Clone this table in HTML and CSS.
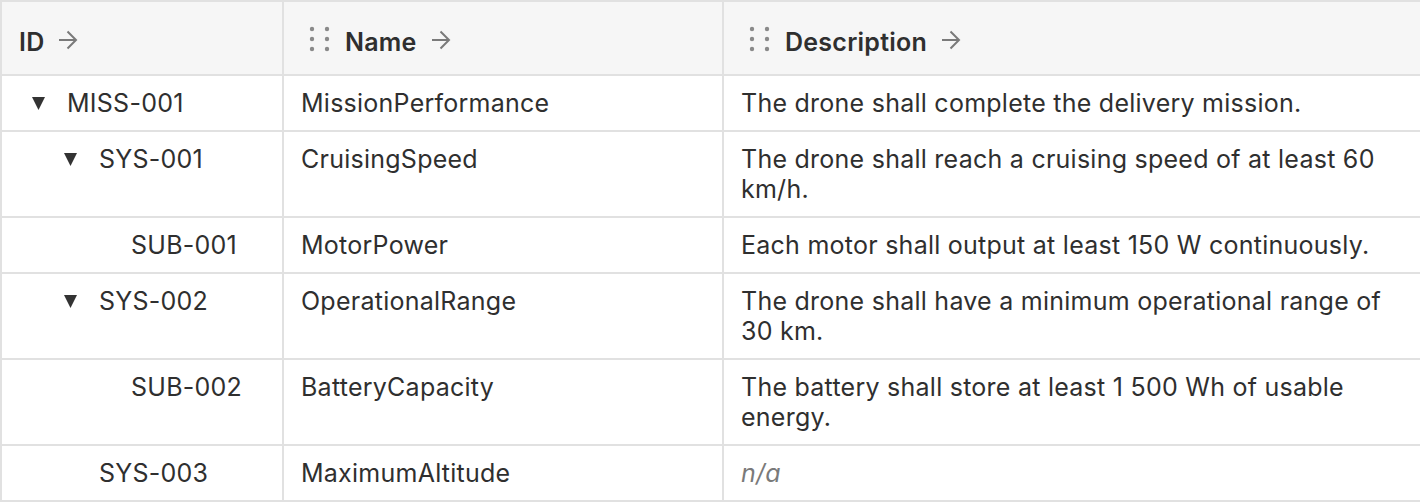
FILE: index.html
```html
<!DOCTYPE html>
<html lang="en">
<head>
    <meta charset="UTF-8">
    <meta name="viewport" content="width=device-width, initial-scale=1.0">
    <title>Requirements</title>
    <link rel="stylesheet" href="styles.css">
</head>
<body>
    <table class="req-table">
        <colgroup>
            <col class="col-id">
            <col class="col-name">
            <col class="col-desc">
        </colgroup>
        <thead>
            <tr>
                <th>
                    <div class="head">
                        <span>ID</span>
                        <svg class="sort-arrow" width="20" height="20" viewBox="0 0 20 20"><path d="M1 10h17M9.5 1.5l8.5 8.5-8.5 8.5" fill="none" stroke="currentColor" stroke-width="2"/></svg>
                    </div>
                </th>
                <th>
                    <div class="head">
                        <svg class="drag" width="24" height="26" viewBox="0 0 24 26"><circle cx="3" cy="3" r="2.2"/><circle cx="18" cy="3" r="2.2"/><circle cx="3" cy="13" r="2.2"/><circle cx="18" cy="13" r="2.2"/><circle cx="3" cy="23" r="2.2"/><circle cx="18" cy="23" r="2.2"/></svg>
                        <span>Name</span>
                        <svg class="sort-arrow" width="20" height="20" viewBox="0 0 20 20"><path d="M1 10h17M9.5 1.5l8.5 8.5-8.5 8.5" fill="none" stroke="currentColor" stroke-width="2"/></svg>
                    </div>
                </th>
                <th>
                    <div class="head">
                        <svg class="drag" width="24" height="26" viewBox="0 0 24 26"><circle cx="3" cy="3" r="2.2"/><circle cx="18" cy="3" r="2.2"/><circle cx="3" cy="13" r="2.2"/><circle cx="18" cy="13" r="2.2"/><circle cx="3" cy="23" r="2.2"/><circle cx="18" cy="23" r="2.2"/></svg>
                        <span>Description</span>
                        <svg class="sort-arrow" width="20" height="20" viewBox="0 0 20 20"><path d="M1 10h17M9.5 1.5l8.5 8.5-8.5 8.5" fill="none" stroke="currentColor" stroke-width="2"/></svg>
                    </div>
                </th>
            </tr>
        </thead>
        <tbody>
            <tr>
                <td><div class="tree depth-0"><span class="toggle"><svg width="13" height="13" viewBox="0 0 13 13"><path d="M0 0h13L6.5 13z"/></svg></span>MISS-001</div></td>
                <td>MissionPerformance</td>
                <td>The drone shall complete the delivery mission.</td>
            </tr>
            <tr>
                <td><div class="tree depth-1"><span class="toggle"><svg width="13" height="13" viewBox="0 0 13 13"><path d="M0 0h13L6.5 13z"/></svg></span>SYS-001</div></td>
                <td>CruisingSpeed</td>
                <td>The drone shall reach a cruising speed of at least 60 km/h.</td>
            </tr>
            <tr>
                <td><div class="tree depth-2"><span class="toggle"></span>SUB-001</div></td>
                <td>MotorPower</td>
                <td>Each motor shall output at least 150 W continuously.</td>
            </tr>
            <tr>
                <td><div class="tree depth-1"><span class="toggle"><svg width="13" height="13" viewBox="0 0 13 13"><path d="M0 0h13L6.5 13z"/></svg></span>SYS-002</div></td>
                <td>OperationalRange</td>
                <td>The drone shall have a minimum operational range of 30 km.</td>
            </tr>
            <tr>
                <td><div class="tree depth-2"><span class="toggle"></span>SUB-002</div></td>
                <td>BatteryCapacity</td>
                <td>The battery shall store at least 1&nbsp;500 Wh of usable energy.</td>
            </tr>
            <tr>
                <td><div class="tree depth-1"><span class="toggle"></span>SYS-003</div></td>
                <td>MaximumAltitude</td>
                <td><span class="empty">n/a</span></td>
            </tr>
        </tbody>
    </table>
</body>
</html>
```

FILE: styles.css
```css
:root {
    --border: #e1e1e1;
    --text: #2f2f2f;
    --muted: #7a7a7a;
    --head-bg: #f6f6f6;
}

* {
    margin: 0;
    padding: 0;
    box-sizing: border-box;
}

body {
    font-family: Inter, 'Noto Sans', sans-serif;
    font-size: 25px;
    letter-spacing: 0.25px;
    line-height: 30px;
    color: var(--text);
    background: white;
    overflow: hidden;
}

.req-table {
    border-collapse: separate;
    border-spacing: 0;
    table-layout: fixed;
    width: 1420px;
    border-left: 2px solid var(--border);
    border-top: 2px solid var(--border);
}

.col-id { width: 282px; }
.col-name { width: 440px; }
.col-desc { width: 696px; }

th, td {
    border-right: 2px solid var(--border);
    border-bottom: 2px solid var(--border);
    text-align: left;
    vertical-align: top;
    padding: 12px 17px;
}

th:last-child, td:last-child {
    border-right: none;
}

th {
    background: var(--head-bg);
    font-weight: 600;
    padding-top: 25px;
    padding-bottom: 17px;
}

.head {
    display: flex;
    align-items: center;
}

.sort-arrow {
    color: var(--muted);
    margin-left: 14px;
    margin-top: -4px;
}

.drag {
    fill: #8a8a8a;
    margin-left: 8px;
    margin-right: 12px;
    margin-top: -6px;
}

.tree {
    display: flex;
    align-items: center;
}

.depth-1 { padding-left: 32px; }
.depth-2 { padding-left: 64px; }

.toggle {
    width: 48px;
    flex-shrink: 0;
    display: flex;
    align-items: center;
    padding-left: 13px;
    color: #333;
}

.toggle svg {
    fill: currentColor;
}

.empty {
    color: var(--muted);
    font-style: italic;
}
```
